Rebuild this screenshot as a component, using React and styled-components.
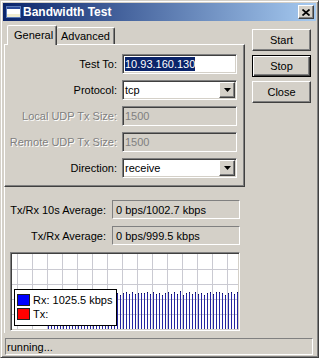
import React from "react";
import styled, { createGlobalStyle } from "styled-components";

const GlobalStyle = createGlobalStyle`
  html, body {
    margin: 0;
    padding: 0;
    background: #ffffff;
  }
`;

const raised = `
  border: 1px solid;
  border-color: #ffffff #404040 #404040 #ffffff;
  box-shadow: inset -1px -1px #808080, inset 1px 1px #d4d0c8;
`;

const Window = styled.div`
  width: 319px;
  height: 358px;
  box-sizing: border-box;
  border: 1px solid;
  border-color: #d4d0c8 #404040 #404040 #d4d0c8;
  box-shadow: inset 1px 1px #ffffff, inset -1px -1px #808080;
  padding: 2px;
  background: #d4d0c8;
  display: flex;
  flex-direction: column;
  font-family: "Liberation Sans", Arial, sans-serif;
  font-size: 11px;
  color: #000;
  overflow: hidden;
`;

const TitleBar = styled.div`
  height: 18px;
  flex-shrink: 0;
  display: flex;
  align-items: center;
  padding: 0 2px 0 3px;
  background: linear-gradient(to right, #0a246a, #a6caf0);
  color: #fff;
  font-weight: bold;
  font-size: 12px;
`;

const TitleText = styled.div`
  flex: 1;
  margin-left: 2px;
`;

const CloseBox = styled.div`
  width: 16px;
  height: 14px;
  box-sizing: border-box;
  background: #d4d0c8;
  ${raised}
  display: flex;
  align-items: center;
  justify-content: center;
`;

const Body = styled.div`
  flex: 1;
  display: flex;
  flex-direction: column;
  padding: 4px 0 0 1px;
`;

const TopRow = styled.div`
  display: flex;
  align-items: flex-start;
  gap: 7px;
`;

const LeftCol = styled.div`
  width: 241px;
`;

const TabRow = styled.div`
  height: 19px;
  display: flex;
  align-items: flex-end;
  padding-left: 3px;
`;

const Tab = styled.div`
  position: relative;
  z-index: ${(p) => (p.$active ? 1 : 0)};
  width: ${(p) => p.$w}px;
  height: ${(p) => (p.$active ? 20 : 17)}px;
  margin-bottom: ${(p) => (p.$active ? -1 : 0)}px;
  box-sizing: border-box;
  background: #d4d0c8;
  border-top: 1px solid #ffffff;
  border-left: ${(p) => (p.$first ? "1px solid #ffffff" : "none")};
  border-right: 1px solid #404040;
  box-shadow: inset -1px 0 #808080;
  border-radius: 2px 2px 0 0;
  display: flex;
  align-items: center;
  padding-left: ${(p) => (p.$active ? 6 : 4)}px;
  padding-bottom: ${(p) => (p.$active ? 2 : 0)}px;
`;

const TabPanel = styled.div`
  height: 143px;
  box-sizing: border-box;
  border: 1px solid;
  border-color: #ffffff #404040 #404040 #ffffff;
  box-shadow: inset -1px -1px #808080;
  padding-top: 9px;
`;

const FieldGrid = styled.div`
  display: grid;
  grid-template-columns: 112px 115px;
  column-gap: 5px;
  row-gap: 6px;
  align-items: center;
`;

const Label = styled.div`
  text-align: right;
  white-space: nowrap;
  color: ${(p) => (p.$disabled ? "#808080" : "#000")};
  text-shadow: ${(p) => (p.$disabled ? "1px 1px #ffffff" : "none")};
`;

const Field = styled.div`
  height: 20px;
  box-sizing: border-box;
  border: 1px solid;
  border-color: #808080 #ffffff #ffffff #808080;
  box-shadow: inset 1px 1px #404040, inset -1px -1px #d4d0c8;
  padding: 1px;
  background: ${(p) => (p.$disabled ? "#d4d0c8" : "#ffffff")};
  color: ${(p) => (p.$disabled ? "#808080" : "#000")};
  display: flex;
  align-items: center;
`;

const FieldText = styled.span`
  flex: 1;
  padding-left: 1px;
  white-space: nowrap;
`;

const Selected = styled.span`
  background: #0a246a;
  color: #ffffff;
  padding: 1px 0;
`;

const ArrowBtn = styled.div`
  width: 16px;
  height: 16px;
  box-sizing: border-box;
  background: #d4d0c8;
  ${raised}
  display: flex;
  align-items: center;
  justify-content: center;
`;

const ButtonCol = styled.div`
  width: 59px;
  margin-top: 4px;
  display: flex;
  flex-direction: column;
  gap: 4px;
`;

const Button = styled.div`
  height: 22px;
  box-sizing: border-box;
  background: #d4d0c8;
  display: flex;
  align-items: center;
  justify-content: center;
  ${(p) =>
    p.$default
      ? `border: 1px solid #000;
         box-shadow: inset 1px 1px #ffffff, inset -1px -1px #404040, inset -2px -2px #808080;`
      : raised}
`;

const LowerArea = styled.div`
  width: 241px;
  box-sizing: border-box;
  border-left: 1px solid #ffffff;
  padding: 13px 0 2px 0;
`;

const AvgGrid = styled.div`
  display: grid;
  grid-template-columns: 101px 128px;
  column-gap: 6px;
  row-gap: 7px;
  align-items: center;
`;

const AvgBox = styled.div`
  height: 19px;
  box-sizing: border-box;
  border: 1px solid;
  border-color: #808080 #ffffff #ffffff #808080;
  display: flex;
  align-items: center;
  padding-left: 3px;
  white-space: nowrap;
`;

const Graph = styled.div`
  margin: 7px 0 0 5px;
  width: 230px;
  height: 79px;
  box-sizing: border-box;
  border: 1px solid;
  border-color: #808080 #ffffff #ffffff #808080;
  box-shadow: inset 1px 1px #404040, inset -1px -1px #d4d0c8;
  padding: 1px;
  background: #ffffff;
`;

const GraphInner = styled.div`
  position: relative;
  width: 226px;
  height: 75px;
  overflow: hidden;
`;

const Legend = styled.div`
  position: absolute;
  left: 2px;
  top: 35px;
  width: 103px;
  height: 37px;
  box-sizing: border-box;
  border: 1px solid #000;
  background: #ffffff;
  padding: 4px 2px 0 2px;
  display: flex;
  flex-direction: column;
  gap: 2px;
`;

const LegendRow = styled.div`
  display: flex;
  align-items: center;
  gap: 3px;
  height: 12px;
`;

const Swatch = styled.div`
  width: 13px;
  height: 12px;
  box-sizing: border-box;
  border: 1px solid #202020;
  background: ${(p) => p.$color};
`;

const StatusBar = styled.div`
  margin: 5px 0 0 1px;
  width: 308px;
  height: 17px;
  box-sizing: border-box;
  border: 1px solid;
  border-color: #808080 #ffffff #ffffff #808080;
  display: flex;
  align-items: center;
  padding-left: 1px;
`;

function WindowIcon() {
  return (
    <svg width="15" height="12" viewBox="0 0 15 12">
      <rect x="0.5" y="0.5" width="14" height="11" fill="#ffffff" stroke="#5a7ab8" />
      <rect x="1" y="1" width="13" height="2" fill="#2a4a9a" />
      <rect x="1" y="8" width="13" height="3" fill="#f0ecd0" />
    </svg>
  );
}

function CloseGlyph() {
  return (
    <svg width="8" height="7" viewBox="0 0 8 7">
      <path d="M0.5 0.5 L7.5 6.5 M7.5 0.5 L0.5 6.5" stroke="#000" strokeWidth="1.7" />
    </svg>
  );
}

function DownArrow() {
  return (
    <svg width="7" height="4" viewBox="0 0 7 4">
      <path d="M0 0 H7 L3.5 4 Z" fill="#000" />
    </svg>
  );
}

const bars = [];
for (let i = 0; i < 64; i++) {
  const n = (i * 37 + 11) % 7;
  const top = 38 + (n % 4) - (i % 13 === 5 ? 2 : 0);
  bars.push({ x: 36.5 + i * 3, top });
}

function Chart() {
  const vlines = [];
  for (let k = 0; k < 15; k++) vlines.push(5.5 + k * 15);
  const hlines = [15.5, 30.5, 45.5, 60.5];
  return (
    <svg width="226" height="75" viewBox="0 0 226 75" shapeRendering="crispEdges">
      {vlines.map((x) => (
        <line key={"v" + x} x1={x} y1="0" x2={x} y2="75" stroke="#cacad2" />
      ))}
      {hlines.map((y) => (
        <line key={"h" + y} x1="0" y1={y} x2="226" y2={y} stroke="#cacad2" />
      ))}
      {bars.map((b) => (
        <g key={b.x}>
          <line x1={b.x} y1={b.top} x2={b.x} y2="75" stroke="#2424a0" />
          <line x1={b.x} y1={b.top} x2={b.x} y2={b.top + 1} stroke="#0c0c60" />
        </g>
      ))}
    </svg>
  );
}

export default function App() {
  return (
    <>
      <GlobalStyle />
      <Window>
        <TitleBar>
          <WindowIcon />
          <TitleText>Bandwidth Test</TitleText>
          <CloseBox>
            <CloseGlyph />
          </CloseBox>
        </TitleBar>
        <Body>
          <TopRow>
            <LeftCol>
              <TabRow>
                <Tab $active $first $w={50}>General</Tab>
                <Tab $w={58}>Advanced</Tab>
              </TabRow>
              <TabPanel>
                <FieldGrid>
                  <Label>Test To:</Label>
                  <Field>
                    <FieldText>
                      <Selected>10.93.160.130</Selected>
                    </FieldText>
                  </Field>
                  <Label>Protocol:</Label>
                  <Field>
                    <FieldText>tcp</FieldText>
                    <ArrowBtn>
                      <DownArrow />
                    </ArrowBtn>
                  </Field>
                  <Label $disabled>Local UDP Tx Size:</Label>
                  <Field $disabled>
                    <FieldText>1500</FieldText>
                  </Field>
                  <Label $disabled>Remote UDP Tx Size:</Label>
                  <Field $disabled>
                    <FieldText>1500</FieldText>
                  </Field>
                  <Label>Direction:</Label>
                  <Field>
                    <FieldText>receive</FieldText>
                    <ArrowBtn>
                      <DownArrow />
                    </ArrowBtn>
                  </Field>
                </FieldGrid>
              </TabPanel>
            </LeftCol>
            <ButtonCol>
              <Button>Start</Button>
              <Button $default>Stop</Button>
              <Button>Close</Button>
            </ButtonCol>
          </TopRow>
          <LowerArea>
            <AvgGrid>
              <Label>Tx/Rx 10s Average:</Label>
              <AvgBox>0 bps/1002.7 kbps</AvgBox>
              <Label>Tx/Rx Average:</Label>
              <AvgBox>0 bps/999.5 kbps</AvgBox>
            </AvgGrid>
            <Graph>
              <GraphInner>
                <Chart />
                <Legend>
                  <LegendRow>
                    <Swatch $color="#0000ff" />
                    Rx: 1025.5 kbps
                  </LegendRow>
                  <LegendRow>
                    <Swatch $color="#ff0000" />
                    Tx:
                  </LegendRow>
                </Legend>
              </GraphInner>
            </Graph>
          </LowerArea>
          <StatusBar>running...</StatusBar>
        </Body>
      </Window>
    </>
  );
}
